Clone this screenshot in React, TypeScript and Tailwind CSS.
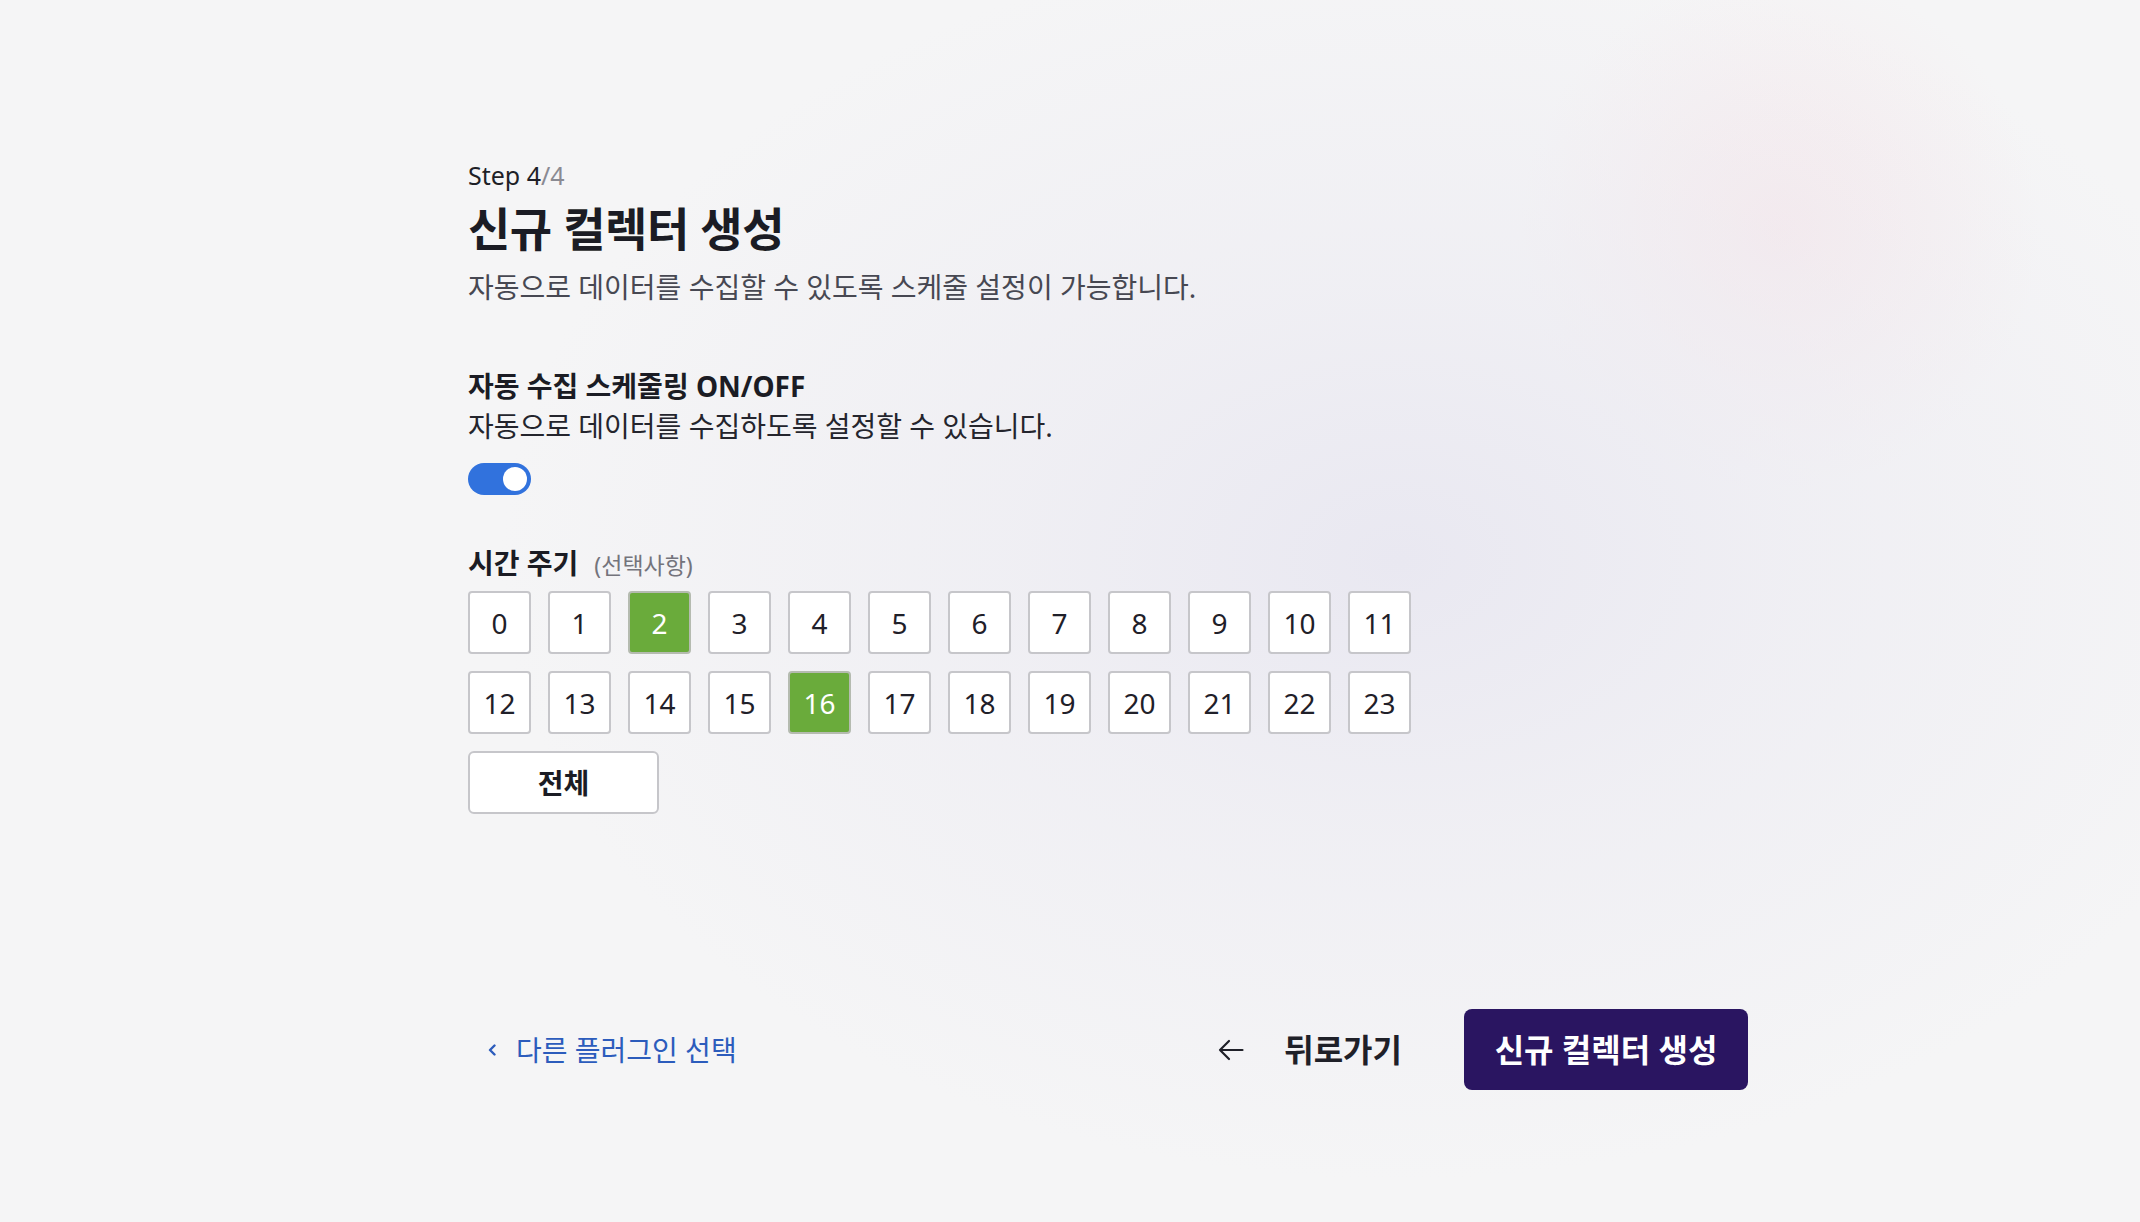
import React, { useState } from "react";

const hours = Array.from({ length: 24 }, (_, i) => i);

const HourBox = ({ h, on }: { h: number; on: boolean }) => (
  <button
    className={`h-[63px] w-[63px] rounded-[4px] border-2 flex items-center justify-center text-[28px] font-['Noto_Sans',sans-serif] ${
      on
        ? "bg-[#6aab3b] border-[#b5bbb0] text-white"
        : "bg-white border-[#c6c6ca] text-[#1f2029]"
    }`}
  >
    <span className="leading-none">{h}</span>
  </button>
);

export default function App() {
  const [enabled, setEnabled] = useState(true);
  const selected = [2, 16];

  return (
    <div className="min-h-[1222px] w-full bg-[#f5f5f6] bg-[radial-gradient(ellipse_900px_620px_at_1400px_560px,#e9e8f1_0%,rgba(236,235,242,0.6)_45%,rgba(245,245,246,0)_100%),radial-gradient(circle_260px_at_1780px_230px,rgba(246,228,232,0.7),rgba(245,245,246,0))] font-['Noto_Sans','Noto_Sans_CJK_KR',sans-serif] text-[#1e1f27]">
      <div className="ml-[468px] w-[1280px] pt-[159px]">
        <div className="text-[25px] leading-[32px]">
          Step 4<span className="text-[#8a8a92]">/4</span>
        </div>
        <h1 className="mt-[9px] text-[46px] leading-[56px] font-bold tracking-[-0.01em] text-[#1b1c24]">
          신규 컬렉터 생성
        </h1>
        <p className="mt-[13px] text-[28px] leading-[36px] text-[#474852]">
          자동으로 데이터를 수집할 수 있도록 스케줄 설정이 가능합니다.
        </p>

        <h2 className="mt-[63px] text-[28px] leading-[36px] font-bold text-[#1b1c24]">
          자동 수집 스케줄링 ON/OFF
        </h2>
        <p className="mt-[4px] text-[28px] leading-[36px] text-[#24252d]">
          자동으로 데이터를 수집하도록 설정할 수 있습니다.
        </p>

        <button
          onClick={() => setEnabled(!enabled)}
          className={`mt-[19px] flex h-[32px] w-[63px] items-center rounded-full px-[4px] ${
            enabled ? "bg-[#3172dd] justify-end" : "bg-[#c6c6ca] justify-start"
          }`}
        >
          <span className="block h-[24px] w-[24px] rounded-full bg-white" />
        </button>

        <div className="mt-[50px] flex items-baseline gap-[16px] leading-[36px]">
          <span className="text-[28px] font-bold text-[#1b1c24]">시간 주기</span>
          <span className="text-[23px] text-[#74747c]">(선택사항)</span>
        </div>

        <div className="mt-[8px] grid grid-cols-[repeat(12,63px)] gap-[17px]">
          {hours.map((h) => (
            <HourBox key={h} h={h} on={selected.includes(h)} />
          ))}
        </div>
        <button className="mt-[17px] h-[63px] w-[191px] rounded-[6px] border-2 border-[#c6c6ca] bg-white text-[28px] font-bold text-[#1b1c24]">
          전체
        </button>

        <div className="mt-[195px] flex h-[81px] items-center">
          <button className="flex items-center gap-[20px] pl-[20px] text-[28px] text-[#2c5cbc]">
            <svg width="8" height="12" viewBox="0 0 8 12" fill="none">
              <path d="M6.5 1.5L2 6l4.5 4.5" stroke="#2c5cbc" strokeWidth="2.4" strokeLinecap="round" strokeLinejoin="round" />
            </svg>
            <span>다른 플러그인 선택</span>
          </button>
          <div className="flex-1" />
          <button className="flex items-center gap-[40px] text-[32px] font-bold text-[#1f2028]">
            <svg width="26" height="22" viewBox="0 0 26 22" fill="none">
              <path d="M24.5 11H2M11 2L2 11l9 9" stroke="#1f2028" strokeWidth="2.2" strokeLinecap="round" strokeLinejoin="round" />
            </svg>
            <span>뒤로가기</span>
          </button>
          <button className="ml-[62px] h-[81px] w-[284px] rounded-[8px] bg-[#2a1561] text-[32px] font-bold text-white">
            신규 컬렉터 생성
          </button>
        </div>
      </div>
    </div>
  );
}
